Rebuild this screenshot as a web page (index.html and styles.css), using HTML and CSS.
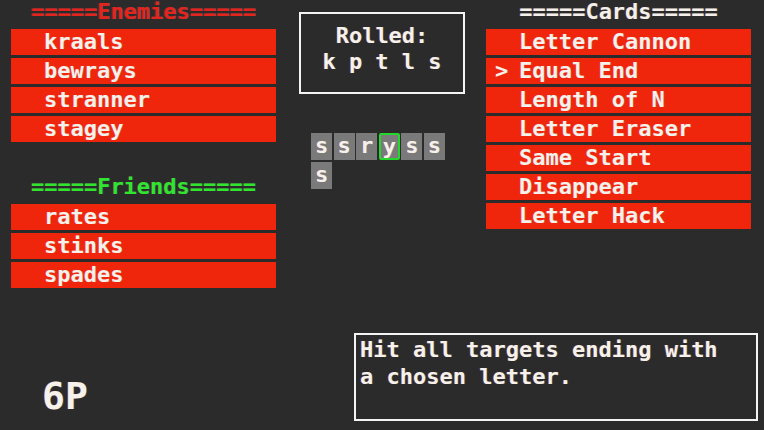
FILE: index.html
```html
<!DOCTYPE html>
<html>
<head>
<meta charset="utf-8">
<link rel="stylesheet" href="styles.css">
</head>
<body>
<div class="screen">
  <div class="top">
    <section class="col side">
      <div class="header enemies">=====Enemies=====</div>
      <div class="list">
        <div class="row"><span class="cursor"></span>kraals</div>
        <div class="row"><span class="cursor"></span>bewrays</div>
        <div class="row"><span class="cursor"></span>stranner</div>
        <div class="row"><span class="cursor"></span>stagey</div>
      </div>
      <div class="header friends">=====Friends=====</div>
      <div class="list">
        <div class="row"><span class="cursor"></span>rates</div>
        <div class="row"><span class="cursor"></span>stinks</div>
        <div class="row"><span class="cursor"></span>spades</div>
      </div>
    </section>
    <section class="col middle">
      <div class="rolled">
        <div class="line">Rolled:</div>
        <div class="line">k p t l s</div>
      </div>
      <div class="tiles">
        <span class="tile">s</span>
        <span class="tile">s</span>
        <span class="tile">r</span>
        <span class="tile sel">y</span>
        <span class="tile">s</span>
        <span class="tile">s</span>
        <span class="tile">s</span>
      </div>
    </section>
    <section class="col side">
      <div class="header cards">=====Cards=====</div>
      <div class="list">
        <div class="row"><span class="cursor"></span>Letter Cannon</div>
        <div class="row"><span class="cursor">&gt;</span>Equal End</div>
        <div class="row"><span class="cursor"></span>Length of N</div>
        <div class="row"><span class="cursor"></span>Letter Eraser</div>
        <div class="row"><span class="cursor"></span>Same Start</div>
        <div class="row"><span class="cursor"></span>Disappear</div>
        <div class="row"><span class="cursor"></span>Letter Hack</div>
      </div>
    </section>
  </div>
  <div class="bottom">
    <div class="points">6P</div>
    <div class="desc"><div class="line">Hit all targets ending with</div><div class="line">a chosen letter.</div></div>
  </div>
</div>
</body>
</html>
```
FILE: styles.css
```css
html, body {
  margin: 0;
  padding: 0;
  background: #2b2b2b;
}
.screen {
  width: 764px;
  height: 430px;
  display: flex;
  flex-direction: column;
  font-family: "DejaVu Sans Mono", "Liberation Mono", monospace;
  font-weight: bold;
  font-size: 22px;
  color: #f6f1ea;
  overflow: hidden;
  box-sizing: border-box;
  text-shadow: -1px 0 rgba(255, 60, 120, 0.25), 1px 0 rgba(80, 255, 220, 0.15);
}
.top {
  display: flex;
  padding-left: 11px;
}
.col.side {
  width: 265px;
  display: flex;
  flex-direction: column;
}
.col.middle {
  width: 166px;
  margin: 0 21px 0 23px;
  padding-top: 12px;
  display: flex;
  flex-direction: column;
}
.header {
  height: 24px;
  line-height: 24px;
  margin-bottom: 5px;
  text-align: center;
}
.enemies { color: #e3241c; }
.friends { color: #2ee62e; margin-top: 33px; }
.cards { color: #f3f0ea; }
.list {
  display: flex;
  flex-direction: column;
  gap: 3px;
}
.row {
  height: 26px;
  line-height: 26px;
  background: #f0260c;
  display: flex;
  padding-left: 9px;
  white-space: pre;
}
.cursor {
  width: 24px;
  flex: none;
}
.rolled {
  height: 82px;
  box-sizing: border-box;
  border: 2px solid #f4f4f4;
  padding-top: 9px;
  text-align: center;
  line-height: 26px;
}
.line {
  white-space: pre;
}
.tiles {
  margin: 39px 0 0 12px;
  width: 136px;
  display: flex;
  flex-wrap: wrap;
  column-gap: 1.6px;
  row-gap: 2px;
}
.tile {
  width: 21px;
  height: 27px;
  line-height: 25px;
  box-sizing: border-box;
  background: #7a7a7a;
  text-align: center;
}
.tile.sel {
  border: 2px solid #25d62b;
  border-radius: 2px;
  line-height: 23px;
}
.bottom {
  margin-top: auto;
  display: flex;
  align-items: flex-end;
  padding: 0 6px 9px 42px;
}
.points {
  font-size: 38px;
  line-height: 40px;
  margin-bottom: 5px;
}
.desc {
  margin-left: auto;
  width: 404px;
  height: 88px;
  box-sizing: border-box;
  border: 2px solid #f4f4f4;
  padding: 1px 0 0 4px;
  line-height: 27px;
}
```
